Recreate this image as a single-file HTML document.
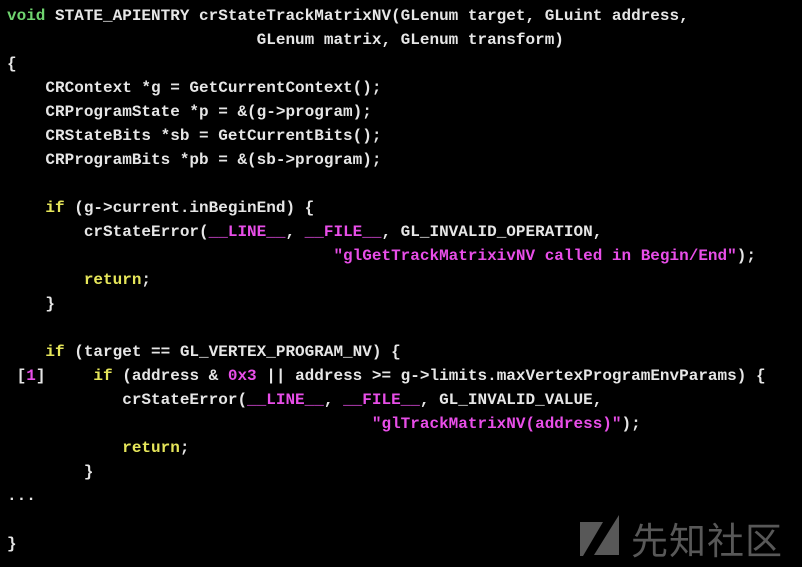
<!DOCTYPE html>
<html><head><meta charset="utf-8"><style>
html,body{margin:0;padding:0;background:#000;width:802px;height:567px;overflow:hidden}
pre{margin:0;position:absolute;left:7px;top:4px;font-family:"Liberation Mono",monospace;font-size:16px;line-height:24px;color:#e6e6e6;font-weight:bold;letter-spacing:0}
.g{color:#6fd46f}.y{color:#e6e65a}.m{color:#e84ee8}
.wm{position:absolute;left:631px;top:514px;font-family:"Noto Sans CJK SC",sans-serif;font-size:37px;color:#585858;line-height:48px;letter-spacing:1px}
svg{position:absolute;left:0;top:0}
</style></head><body>
<pre><span class="g">void</span> STATE_APIENTRY crStateTrackMatrixNV(GLenum target, GLuint address,
                          GLenum matrix, GLenum transform)
{
    CRContext *g = GetCurrentContext();
    CRProgramState *p = &amp;(g-&gt;program);
    CRStateBits *sb = GetCurrentBits();
    CRProgramBits *pb = &amp;(sb-&gt;program);

    <span class="y">if</span> (g-&gt;current.inBeginEnd) {
        crStateError(<span class="m">__LINE__</span>, <span class="m">__FILE__</span>, GL_INVALID_OPERATION,
                                  <span class="m">"glGetTrackMatrixivNV called in Begin/End"</span>);
        <span class="y">return</span>;
    }

    <span class="y">if</span> (target == GL_VERTEX_PROGRAM_NV) {
 [<span class="m">1</span>]     <span class="y">if</span> (address &amp; <span class="m">0x3</span> || address &gt;= g-&gt;limits.maxVertexProgramEnvParams) {
            crStateError(<span class="m">__LINE__</span>, <span class="m">__FILE__</span>, GL_INVALID_VALUE,
                                      <span class="m">"glTrackMatrixNV(address)"</span>);
            <span class="y">return</span>;
        }
...

}</pre>
<svg width="802" height="567"><polygon points="580,522 603,522 583,556 580,556" fill="#585858"/><polygon points="619,515 619,555 594,555" fill="#585858"/></svg>
<div class="wm">先知社区</div>
</body></html>
